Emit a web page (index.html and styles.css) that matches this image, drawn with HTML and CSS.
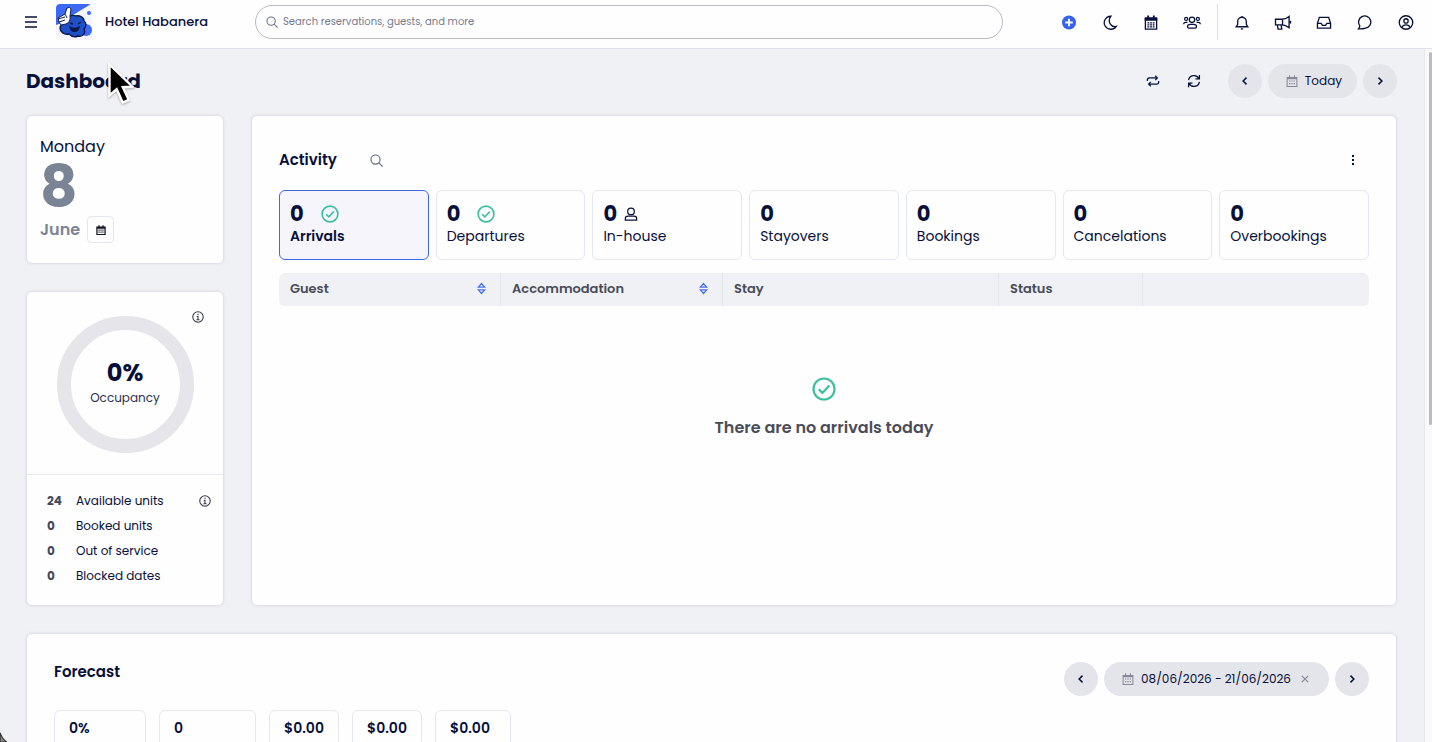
FILE: index.html
```
<!DOCTYPE html>
<html lang="en">

<head>
    <meta charset="UTF-8">
    <meta name="viewport" content="width=device-width, initial-scale=1.0">
    <title>Dashboard - Hotel Habanera</title>
    <link rel="stylesheet" href="styles.css">
</head>

<body>
    <!-- shared icons -->
    <svg class="sprite" aria-hidden="true">
        <symbol id="i-search" viewBox="0 0 16 16">
            <circle cx="6.8" cy="6.8" r="5.6" />
            <path d="M11 11l4.5 4.5" />
        </symbol>
        <symbol id="i-calendar" viewBox="0 0 16 16">
            <path d="M1.5 3.5h13v11.8h-13zM4.8.3v3.2M11.2.3v3.2M1.5 4.800h13" />
            <path d="M4 8h1.800M7.100 8h1.800M10.200 8H12M4 11.500h1.800M7.100 11.500h1.800M10.200 11.500H12" />
        </symbol>
        <symbol id="i-left" viewBox="0 0 16 16">
            <path d="M10 3.5L5.5 8l4.5 4.5" />
        </symbol>
        <symbol id="i-right" viewBox="0 0 16 16">
            <path d="M6 3.5L10.5 8 6 12.5" />
        </symbol>
        <symbol id="i-check" viewBox="0 0 24 24">
            <circle cx="12" cy="12" r="10.5" />
            <path d="M6.8 12.3l3.6 3.6 6.9-7.3" />
        </symbol>
        <symbol id="i-info" viewBox="0 0 16 16">
            <circle cx="8" cy="8" r="7" />
            <path d="M8 3.8v1.7M6.3 7.2H8v4.2M6 11.6h4" />
        </symbol>
        <symbol id="i-sort" viewBox="0 0 10 14">
            <path d="M1.500 5.500L5 1.500l3.500 4zM1.500 8.500L5 12.500l3.500-4z" />
        </symbol>
    </svg>

    <header class="topbar">
        <button class="icon-btn menu-btn" aria-label="Menu">
            <svg viewBox="0 0 16 16"><path d="M2 3h12M2 8h12M2 13h12" /></svg>
        </button>
        <svg class="logo" viewBox="0 0 36 36" role="img" aria-label="Hotel logo">
            <path class="logo-bg" d="M3 0h32L17 11 6 19 0 21V3a3 3 0 0 1 3-3z" />
            <circle class="logo-bg" cx="33" cy="9" r="2" />
            <circle class="logo-bg" cx="30" cy="26" r="6" />
            <path class="logo-cloud" d="M4 24c0-4 4-4 6-5 1-6 5-9 10-7 3-1 8 1 8 5 3 2 2 6 0 8 2 4-1 8-6 7-4 2-7 0-9-2-5 1-9-2-9-6z" />
            <path class="logo-face" d="M14 23c3 2 6 2 9 0-1 6-8 6-9 0zM14 19l3 1M22 20l3-2" />
            <path class="logo-hand" d="M2 14l7-4 2-6q3-2 4 1l-1 7q1 6-4 8l-5 1-2-3z" />
            <path class="logo-lines" d="M2 15l7-2M3 18l6-2M9 10l2 4" />
        </svg>
        <span class="hotel">Hotel Habanera</span>
        <label class="search">
            <svg class="icon"><use href="#i-search" /></svg>
            <input type="text" placeholder="Search reservations, guests, and more" aria-label="Search">
        </label>
        <nav class="tools">
            <button class="icon-btn" aria-label="Add">
                <svg viewBox="0 0 16 16"><circle class="plus-disc" cx="8" cy="8" r="7.5" /><path class="plus-sign" d="M8 4v8M4 8h8" /></svg>
            </button>
            <button class="icon-btn" aria-label="Dark mode">
                <svg viewBox="0 0 16 16"><path d="M9 1.2a7 7 0 1 0 5.7 10.9C9.4 13.6 4.6 7.2 9 1.2z" /></svg>
            </button>
            <button class="icon-btn" aria-label="Calendar">
                <svg viewBox="0 0 16 16">
                    <path d="M2 4h12v11H2z" />
                    <path class="fill" d="M1.3 2.500h13.400V6H1.300zM4 .5h2V4H4zM10 .5h2V4h-2z" />
                    <path d="M4.200 8.300h2M7 8.300h2M9.800 8.300h2M4.200 10.500h2M7 10.500h2M9.800 10.500h2M4.200 12.700h2M7 12.700h2M9.800 12.700h2" />
                </svg>
            </button>
            <button class="icon-btn wide" aria-label="Guests">
                <svg viewBox="0 0 20 16">
                    <circle cx="10" cy="5" r="3" /><circle cx="3.5" cy="4" r="1.700" /><circle cx="16.5" cy="4" r="1.700" />
                    <path d="M6.5 14.300h7q1.500 0 1.500-1.500 0-2.800-3-2.800H8q-3 0-3 2.800 0 1.500 1.500 1.500zM.8 10q0-2.200 2-2.200H5M19.200 10q0-2.200-2-2.200H15" />
                </svg>
            </button>
            <span class="divider"></span>
            <button class="icon-btn" aria-label="Notifications">
                <svg viewBox="0 0 16 16"><path d="M8 1v1.300M1.800 12.500h12.400L12.600 10V7a4.600 4.600 0 0 0-9.200 0v3zM6.700 14.800h2.600" /></svg>
            </button>
            <button class="icon-btn wide" aria-label="Announcements">
                <svg viewBox="0 0 18 16"><path d="M1 4.500h7c3 0 5-1 7.500-3v12C13 11.500 11 10.500 8 10.500H1zM8.500 4.500v6M3 10.500l.7 4.500h4l-.7-4.500M17 6v3" /></svg>
            </button>
            <button class="icon-btn" aria-label="Inbox">
                <svg viewBox="0 0 16 16"><path d="M1 9l2-6.500h10L15 9v5H1zM1 9h4l1.300 2h3.400L11 9h4" /></svg>
            </button>
            <button class="icon-btn" aria-label="Messages">
                <svg viewBox="0 0 16 16"><path d="M1 14.800c1-1 1.500-2 1.500-3.300A6.500 6.500 0 1 1 8.500 14C6 14.800 3.500 15 1 14.800z" /></svg>
            </button>
            <button class="icon-btn" aria-label="Account">
                <svg viewBox="0 0 16 16"><circle cx="8" cy="8" r="7.2" /><circle cx="8" cy="6.300" r="2.300" /><path d="M3.800 13.300q.7-2.800 4.200-2.800t4.200 2.800" /></svg>
            </button>
        </nav>
    </header>

    <div class="viewport">
        <main class="page">
            <div class="page-head">
                <h1>Dashboard</h1>
                <div class="controls">
                    <button class="icon-btn small" aria-label="Switch">
                        <svg viewBox="0 0 16 16"><path d="M1.500 8V7q0-2.500 2.500-2.500h9M10.500 2L13 4.500 10.500 7M14.500 8v1q0 2.500-2.500 2.500H3M5.500 9L3 11.500 5.500 14" /></svg>
                    </button>
                    <button class="icon-btn small refresh" aria-label="Refresh">
                        <svg viewBox="0 0 16 16"><path d="M1.800 7A6.300 6.300 0 0 1 13.500 5M14.200 1v4.500H9.700M14.200 9A6.300 6.300 0 0 1 2.500 11M1.800 15v-4.500h4.500" /></svg>
                    </button>
                    <div class="pager">
                        <button class="round" aria-label="Previous day"><svg class="icon"><use href="#i-left" /></svg></button>
                        <button class="pill"><svg class="icon"><use href="#i-calendar" /></svg>Today</button>
                        <button class="round" aria-label="Next day"><svg class="icon"><use href="#i-right" /></svg></button>
                    </div>
                </div>
            </div>

            <div class="overview">
                <div class="side">
                    <section class="card date-card">
                        <div class="weekday">Monday</div>
                        <div class="day">8</div>
                        <div class="month">June
                            <button class="date-btn" aria-label="Pick a date"><svg class="icon"><use href="#i-calendar" /></svg></button>
                        </div>
                    </section>

                    <section class="card occupancy">
                        <div class="gauge-box">
                            <svg class="icon info"><use href="#i-info" /></svg>
                            <div class="gauge">
                                <strong>0%</strong>
                                <span>Occupancy</span>
                            </div>
                        </div>
                        <ul class="units">
                            <li><b>24</b>Available units<svg class="icon info"><use href="#i-info" /></svg></li>
                            <li><b>0</b>Booked units</li>
                            <li><b>0</b>Out of service</li>
                            <li><b>0</b>Blocked dates</li>
                        </ul>
                    </section>
                </div>

                <section class="card activity">
                    <div class="activity-head">
                        <h2>Activity</h2>
                        <button class="icon-btn find" aria-label="Search activity"><svg><use href="#i-search" /></svg></button>
                        <button class="icon-btn more" aria-label="More options">
                            <svg viewBox="0 0 14 14"><path class="fill" d="M6 2h2v2H6zM6 6h2v2H6zM6 10h2v2H6z" /></svg>
                        </button>
                    </div>

                    <div class="tabs">
                        <button class="tab active">
                            <span class="count">0<svg class="icon check"><use href="#i-check" /></svg></span>Arrivals
                        </button>
                        <button class="tab">
                            <span class="count">0<svg class="icon check"><use href="#i-check" /></svg></span>Departures
                        </button>
                        <button class="tab">
                            <span class="count">0<svg class="icon person" viewBox="0 0 16 16"><circle cx="8" cy="5" r="3.800" /><path d="M1.500 15v-1.500q0-3 3-3h7q3 0 3 3V15z" /></svg></span>In-house
                        </button>
                        <button class="tab"><span class="count">0</span>Stayovers</button>
                        <button class="tab"><span class="count">0</span>Bookings</button>
                        <button class="tab"><span class="count">0</span>Cancelations</button>
                        <button class="tab"><span class="count">0</span>Overbookings</button>
                    </div>

                    <table class="list">
                        <thead>
                            <tr>
                                <th class="col-guest"><div class="th-sort">Guest<svg class="icon sort"><use href="#i-sort" /></svg></div></th>
                                <th class="col-room"><div class="th-sort">Accommodation<svg class="icon sort"><use href="#i-sort" /></svg></div></th>
                                <th class="col-stay">Stay</th>
                                <th class="col-status">Status</th>
                                <th></th>
                            </tr>
                        </thead>
                    </table>

                    <div class="empty">
                        <svg class="icon check"><use href="#i-check" /></svg>
                        <p>There are no arrivals today</p>
                    </div>
                </section>
            </div>

            <section class="card forecast">
                <div class="forecast-head">
                    <h2>Forecast</h2>
                    <div class="pager">
                        <button class="round" aria-label="Previous period"><svg class="icon"><use href="#i-left" /></svg></button>
                        <button class="pill">
                            <svg class="icon"><use href="#i-calendar" /></svg>08/06/2026 - 21/06/2026
                            <svg class="icon clear" viewBox="0 0 16 16"><path d="M3 3l10 10M13 3L3 13" /></svg>
                        </button>
                        <button class="round" aria-label="Next period"><svg class="icon"><use href="#i-right" /></svg></button>
                    </div>
                </div>
                <div class="stats">
                    <div class="stat w-rate">0%</div>
                    <div class="stat w-nights">0</div>
                    <div class="stat">$0.00</div>
                    <div class="stat">$0.00</div>
                    <div class="stat w-total">$0.00</div>
                </div>
            </section>
        </main>
        <div class="scroll-rail"><div class="scroll-thumb"></div></div>
    </div>

    <svg class="pointer" viewBox="0 0 28 44" aria-hidden="true">
        <path d="M2.500 2.500v31l7.200-6.200 6 13.200 6-2.700-5.900-12.600 9.700-.5z" />
    </svg>
    <svg class="corner" viewBox="0 0 8 12" aria-hidden="true">
        <path d="M0 1Q2 8 8 12H0z" />
    </svg>
</body>

</html>
```
FILE: styles.css
```
* {
    box-sizing: border-box;
}

body {
    margin: 0;
    height: 100vh;
    display: flex;
    flex-direction: column;
    overflow: hidden;
    background: #f0f1f4;
    color: #07103a;
    font-family: Poppins, Inter, sans-serif;
    font-size: 13px;
}

h1,
h2,
p,
ul {
    margin: 0;
    padding: 0;
}

button,
input {
    font: inherit;
    color: inherit;
}

button {
    padding: 0;
    border: none;
    background: none;
    cursor: pointer;
}

svg {
    display: block;
    fill: none;
    stroke: currentColor;
    stroke-width: 1.4;
    flex: none;
}

.sprite {
    position: absolute;
    width: 0;
    height: 0;
}

.fill {
    fill: currentColor;
    stroke: none;
}

.icon {
    width: 12px;
    height: 12px;
}

.icon-btn {
    width: 16px;
    height: 16px;
    display: flex;
    align-items: center;
    justify-content: center;
}

.icon-btn svg {
    width: 100%;
    height: 100%;
}

/* top bar */

.topbar {
    height: 49px;
    flex: none;
    display: flex;
    align-items: center;
    padding: 0 18px 4px 23px;
    background: #fefefe;
    border-bottom: 1px solid #dfe2ea;
}

.menu-btn {
    margin-right: 17px;
}

.logo {
    width: 36px;
    height: 36px;
    margin-right: 13px;
    background: #f4f4fa;
    border-radius: 4px;
}

.logo-bg {
    fill: #3b68f5;
    stroke: none;
}

.logo-cloud {
    fill: #1f50c8;
    stroke: #0b1a4a;
}

.logo-face {
    fill: #0b1a4a;
    stroke: #0b1a4a;
}

.logo-hand {
    fill: #fff;
    stroke: #14214d;
    stroke-width: 1;
}

.logo-lines {
    stroke: #14214d;
    stroke-width: 1;
}

.hotel {
    width: 150px;
    font-size: 13px;
    font-weight: 500;
    white-space: nowrap;
}

.search {
    flex: 0 1 748px;
    height: 34px;
    display: flex;
    align-items: center;
    gap: 3px;
    padding: 0 10px;
    border: 1px solid #b8bac6;
    border-radius: 17px;
    color: #6b7088;
}

.search input {
    flex: 1;
    min-width: 0;
    border: none;
    outline: none;
    background: none;
    font-size: 10px;
}

.search input::placeholder {
    color: #777b8e;
}

.tools {
    margin-left: auto;
    display: flex;
    align-items: center;
    gap: 25px;
}

.tools .icon-btn {
    width: 16px;
    height: 15px;
}

.tools .wide {
    width: 18px;
    margin: 0 -1px;
}

.plus-disc {
    fill: #3562ee;
    stroke: none;
}

.plus-sign {
    stroke: #fff;
    stroke-width: 2;
}

.divider {
    width: 1px;
    height: 36px;
    margin: 0 -9px 0 -8px;
    background: #dcdfea;
}

/* page */

.viewport {
    flex: 1;
    min-height: 0;
    display: flex;
    align-items: stretch;
}

.page {
    flex: 1;
    min-width: 0;
    padding: 15px 27px 27px 26px;
}

.scroll-rail {
    width: 8px;
    padding: 3px 0 0 4px;
    background: #f9f9fb;
    border-left: 1px solid #e6e7ea;
}

.scroll-thumb {
    height: 54%;
    border-radius: 4px;
    background: #bcbcbe;
}

.page-head,
.controls,
.pager {
    display: flex;
    align-items: center;
}

.page-head {
    justify-content: space-between;
    margin-bottom: 17px;
}

h1 {
    font-size: 20px;
    line-height: 34px;
    font-weight: 700;
}

h2 {
    font-size: 15px;
    line-height: 24px;
    font-weight: 600;
}

.small {
    width: 14px;
    height: 14px;
}

.refresh {
    margin: 0 27px;
}

.pager {
    gap: 6px;
}

.round,
.pill {
    height: 34px;
    display: flex;
    align-items: center;
    justify-content: center;
    border-radius: 17px;
    background: #e4e5ea;
}

.round {
    width: 34px;
}

.round .icon {
    stroke-width: 2;
}

.pill {
    gap: 7px;
    padding: 0 15px 0 18px;
    font-size: 12px;
    white-space: nowrap;
}

.pill .icon {
    color: #858997;
}

.pill .clear {
    width: 10px;
    height: 10px;
    margin: 0 4px 0 2px;
    stroke-width: 2;
}

.card {
    background: #fefefe;
    border: 1px solid #e0e1ea;
    border-radius: 6px;
    box-shadow: 0 0 3px #dddee6;
}

.overview {
    display: grid;
    grid-template-columns: 198px minmax(0, 1fr);
    gap: 27px;
    margin-bottom: 27px;
}

.side {
    display: flex;
    flex-direction: column;
    gap: 27px;
}

.date-card {
    padding: 19px 14px 20px 13px;
}

.weekday {
    font-size: 16px;
    line-height: 24px;
}

.day {
    height: 57px;
    font-size: 58px;
    line-height: 56px;
    font-weight: 700;
    color: #7a8494;
}

.month {
    display: flex;
    align-items: center;
    gap: 7px;
    font-size: 16px;
    font-weight: 600;
    line-height: 24px;
    color: #7c8494;
}

.date-btn {
    width: 27px;
    height: 27px;
    display: flex;
    align-items: center;
    justify-content: center;
    border: 1px solid #e4e6f0;
    border-radius: 4px;
    color: #111320;
}

.date-btn .icon {
    width: 10px;
    height: 10px;
    stroke-width: 2;
}

.gauge-box {
    position: relative;
    padding: 24px 0 21px;
    border-bottom: 1px solid #eaebf4;
}

.info {
    color: #333747;
}

.gauge-box .info {
    position: absolute;
    top: 19px;
    right: 19px;
}

.gauge {
    width: 137px;
    height: 137px;
    margin: 0 auto;
    padding-bottom: 1px;
    display: flex;
    flex-direction: column;
    align-items: center;
    justify-content: center;
    border: 14px solid #e5e5ea;
    border-radius: 50%;
}

.gauge strong {
    font-size: 24px;
    line-height: 28px;
}

.gauge span {
    font-size: 12px;
    line-height: 22px;
    color: #2c3150;
}

.units {
    padding: 13px 12px 17px 20px;
    list-style: none;
    font-size: 12px;
}

.units li {
    display: flex;
    align-items: center;
    height: 25px;
}

.units b {
    width: 29px;
    color: #44485a;
}

.units .info {
    margin-left: auto;
}

/* activity */

.activity {
    padding: 32px 27px;
}

.activity-head {
    display: flex;
    align-items: center;
    margin-bottom: 18px;
}

.find {
    width: 13px;
    height: 13px;
    margin-left: 33px;
    color: #62677a;
}

.more {
    width: 14px;
    height: 14px;
    margin-left: auto;
    margin-right: 9px;
}

.tabs {
    display: grid;
    grid-template-columns: repeat(7, minmax(0, 1fr));
    gap: 7px;
    margin-bottom: 13px;
}

.tab {
    height: 70px;
    display: flex;
    flex-direction: column;
    justify-content: center;
    padding: 0 10px 2px;
    border: 1px solid #e5e7f2;
    border-radius: 6px;
    font-size: 14px;
    line-height: 20px;
    text-align: left;
}

.tab.active {
    background: #f6f5fc;
    border-color: #3c66e4;
    font-weight: 600;
}

.count {
    display: flex;
    align-items: center;
    font-size: 21px;
    line-height: 24px;
    font-weight: 700;
}

.check {
    color: #3bbf9f;
    stroke-width: 2.2;
}

.count .check {
    width: 18px;
    height: 18px;
    margin-left: 17px;
}

.count .person {
    width: 14px;
    height: 14px;
    margin-left: 7px;
}

.list {
    width: 100%;
    table-layout: fixed;
    border-spacing: 0;
}

.list th {
    height: 33px;
    padding: 0 10px 2px 11px;
    background: #f0f1f5;
    border-right: 1px solid #e3e6ea;
    font-size: 13px;
    line-height: 20px;
    font-weight: 600;
    text-align: left;
    color: #484c58;
}

.list th:first-child {
    border-radius: 6px 0 0 6px;
}

.list th:last-child {
    border-right: none;
    border-radius: 0 6px 6px 0;
}

.col-guest,
.col-room {
    width: 222px;
}

.col-stay {
    width: 276px;
}

.col-status {
    width: 144px;
}

.th-sort {
    display: flex;
    align-items: center;
    justify-content: space-between;
}

.sort {
    width: 9px;
    height: 13px;
    margin-right: 4px;
    color: #4a70f2;
}

.empty {
    display: flex;
    flex-direction: column;
    align-items: center;
    gap: 15px;
    padding-top: 71px;
    font-size: 16px;
    line-height: 24px;
    font-weight: 600;
    color: #4a4d59;
}

.empty .check {
    width: 24px;
    height: 24px;
}

/* forecast */

.forecast {
    padding: 28px 27px;
}

.forecast-head {
    display: flex;
    align-items: flex-start;
    justify-content: space-between;
    margin-bottom: 14px;
}

.forecast-head h2 {
    line-height: 20px;
}

.stats {
    display: flex;
    gap: 13px;
}

.stat {
    min-width: 70px;
    height: 70px;
    padding: 7px 14px;
    border: 1px solid #e5e7f2;
    border-radius: 6px;
    font-size: 14px;
    line-height: 20px;
    font-weight: 600;
}

.w-rate {
    width: 92px;
}

.w-nights {
    width: 97px;
}

.w-total {
    width: 76px;
}

/* over the page */

.pointer {
    position: absolute;
    top: 62px;
    left: 107px;
    width: 28px;
    height: 44px;
    fill: #000;
    stroke: #fff;
    stroke-width: 2.4;
    filter: drop-shadow(0 1px 1px rgba(0, 0, 0, 0.3));
}

.corner {
    position: fixed;
    bottom: 0;
    left: 0;
    width: 7px;
    height: 10px;
    fill: #8b8b90;
    stroke: #333;
}
```
